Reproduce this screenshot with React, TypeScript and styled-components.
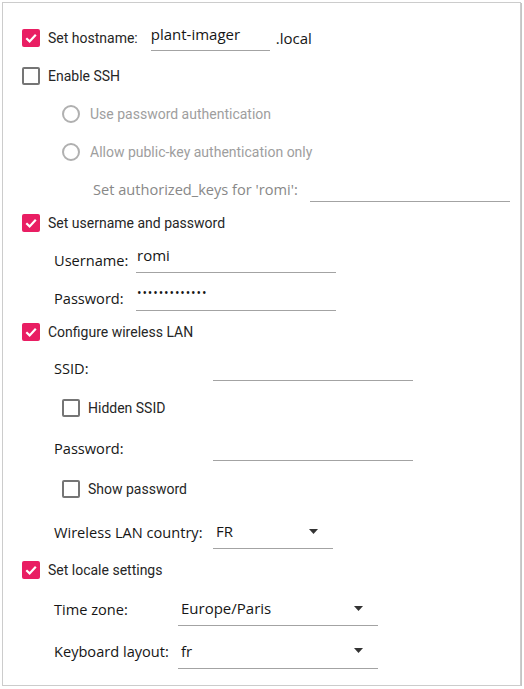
import React from 'react';
import styled, { createGlobalStyle } from 'styled-components';

const GlobalStyle = createGlobalStyle`
  html, body {
    margin: 0;
    padding: 0;
    background: #ffffff;
  }
  body {
    font-family: Roboto, "Liberation Sans", sans-serif;
  }
`;

const PINK = '#e91e63';
const TEXT = '#262626';
const MUTED = '#9e9e9e';
const LINE = '#a3a3a3';

const Frame = styled.div`
  margin: 2px 0 0 2px;
  width: 517px;
  height: 666px;
  border: 1px solid #cccccc;
  box-shadow: 1px 1px 0 #c4c4c4;
  padding-top: 16px;
  display: flex;
  flex-direction: column;
`;

const Row = styled.div<{ $h: number; $indent: number }>`
  display: flex;
  align-items: center;
  height: ${(p) => p.$h}px;
  padding-left: ${(p) => p.$indent}px;
  flex: none;
`;

const CheckLabel = styled.span<{ $muted?: boolean; $gap?: number }>`
  font-family: Roboto, "Liberation Sans", sans-serif;
  font-size: 14px;
  color: ${(p) => (p.$muted ? MUTED : TEXT)};
  margin-left: ${(p) => p.$gap ?? 8}px;
  white-space: nowrap;
`;

const FieldLabel = styled.span<{ $w: number; $muted?: boolean }>`
  font-family: "Open Sans", "Noto Sans", sans-serif;
  font-size: 14.6px;
  color: ${(p) => (p.$muted ? '#888888' : '#161616')};
  width: ${(p) => p.$w}px;
  flex: none;
  white-space: nowrap;
`;

const Field = styled.div<{ $w: number; $h?: number; $pad?: number; $ml?: number; $lift?: number }>`
  width: ${(p) => p.$w}px;
  height: ${(p) => p.$h ?? 26}px;
  margin-left: ${(p) => p.$ml ?? 0}px;
  border-bottom: 1px solid ${LINE};
  display: flex;
  align-items: center;
  padding: 0 0 ${(p) => p.$lift ?? 4}px ${(p) => p.$pad ?? 0}px;
  box-sizing: border-box;
  font-family: "Open Sans", "Noto Sans", sans-serif;
  font-size: 15px;
  color: #161616;
  flex: none;
`;

const ComboText = styled.span`
  flex: 1;
`;

const Dots = styled.span`
  font-size: 12px;
  letter-spacing: 0.9px;
  position: relative;
  top: -1px;
`;

const Suffix = styled.span`
  font-family: "Open Sans", "Noto Sans", sans-serif;
  font-size: 15px;
  color: #161616;
  margin-left: 6px;
`;

const Box = styled.span<{ $checked: boolean }>`
  width: 18px;
  height: 18px;
  box-sizing: border-box;
  border-radius: 2px;
  flex: none;
  display: inline-flex;
  align-items: center;
  justify-content: center;
  background: ${(p) => (p.$checked ? PINK : '#ffffff')};
  border: ${(p) => (p.$checked ? 'none' : '2px solid #757575')};
`;

const Radio = styled.span`
  width: 18px;
  height: 18px;
  box-sizing: border-box;
  border-radius: 50%;
  border: 2px solid #b0b0b0;
  flex: none;
`;

function Check({ checked }: { checked: boolean }) {
  return (
    <Box $checked={checked}>
      {checked && (
        <svg width="18" height="18" viewBox="0 0 18 18">
          <path d="M4.3 9.3 L7.6 12.4 L13.8 5.8" fill="none" stroke="#ffffff" strokeWidth="2.2" />
        </svg>
      )}
    </Box>
  );
}

function Arrow() {
  return (
    <svg width="9" height="5" viewBox="0 0 9 5" style={{ marginRight: 15 }}>
      <path d="M0 0 L9 0 L4.5 5 Z" fill="#333333" />
    </svg>
  );
}

function Combo({ w, value }: { w: number; value: string }) {
  return (
    <Field $w={w} $h={35} $pad={3} $lift={0}>
      <ComboText>{value}</ComboText>
      <Arrow />
    </Field>
  );
}

export default function App() {
  return (
    <>
      <GlobalStyle />
      <Frame>
        <Row $h={38} $indent={19}>
          <Check checked />
          <CheckLabel>Set hostname:</CheckLabel>
          <Field $w={119} $ml={13} $lift={8}>plant-imager</Field>
          <Suffix>.local</Suffix>
        </Row>
        <Row $h={37} $indent={19}>
          <Check checked={false} />
          <CheckLabel>Enable SSH</CheckLabel>
        </Row>
        <Row $h={39} $indent={59}>
          <Radio />
          <CheckLabel $muted $gap={10}>Use password authentication</CheckLabel>
        </Row>
        <Row $h={38} $indent={59}>
          <Radio />
          <CheckLabel $muted $gap={10}>Allow public-key authentication only</CheckLabel>
        </Row>
        <Row $h={35} $indent={90}>
          <FieldLabel $w={217} $muted>Set authorized_keys for 'romi':</FieldLabel>
          <Field $w={200} />
        </Row>
        <Row $h={34} $indent={19}>
          <Check checked />
          <CheckLabel>Set username and password</CheckLabel>
        </Row>
        <Row $h={39} $indent={51}>
          <FieldLabel $w={82}>Username:</FieldLabel>
          <Field $w={200} $pad={1} $lift={8}>romi</Field>
        </Row>
        <Row $h={37} $indent={51}>
          <FieldLabel $w={82}>Password:</FieldLabel>
          <Field $w={200} $pad={1} $lift={8}>
            <Dots>{'•'.repeat(13)}</Dots>
          </Field>
        </Row>
        <Row $h={31} $indent={19}>
          <Check checked />
          <CheckLabel>Configure wireless LAN</CheckLabel>
        </Row>
        <Row $h={41} $indent={51}>
          <FieldLabel $w={159}>SSID:</FieldLabel>
          <Field $w={200} />
        </Row>
        <Row $h={40} $indent={59}>
          <Check checked={false} />
          <CheckLabel>Hidden SSID</CheckLabel>
        </Row>
        <Row $h={40} $indent={51}>
          <FieldLabel $w={159}>Password:</FieldLabel>
          <Field $w={200} />
        </Row>
        <Row $h={42} $indent={59}>
          <Check checked={false} />
          <CheckLabel>Show password</CheckLabel>
        </Row>
        <Row $h={43} $indent={51}>
          <FieldLabel $w={159}>Wireless LAN country:</FieldLabel>
          <Combo w={120} value="FR" />
        </Row>
        <Row $h={34} $indent={19}>
          <Check checked />
          <CheckLabel>Set locale settings</CheckLabel>
        </Row>
        <Row $h={43} $indent={51}>
          <FieldLabel $w={124}>Time zone:</FieldLabel>
          <Combo w={200} value="Europe/Paris" />
        </Row>
        <Row $h={42} $indent={51}>
          <FieldLabel $w={124}>Keyboard layout:</FieldLabel>
          <Combo w={200} value="fr" />
        </Row>
      </Frame>
    </>
  );
}
